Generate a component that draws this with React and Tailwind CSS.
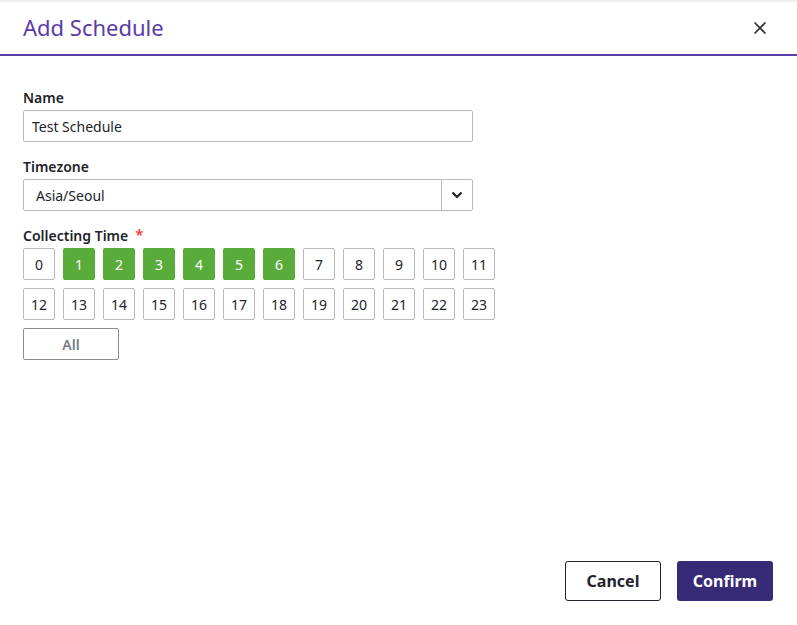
import React, { useState } from 'react';

const HOURS = Array.from({ length: 24 }, (_, i) => i);

const App = () => {
  const [name, setName] = useState('Test Schedule');
  const [selected, setSelected] = useState([1, 2, 3, 4, 5, 6]);

  const toggleHour = (h) => {
    setSelected((prev) => (prev.includes(h) ? prev.filter((x) => x !== h) : [...prev, h]));
  };

  return (
    <div
      className="h-[625px] w-[797px] flex flex-col bg-white border-t-2 border-[#efeff1] text-[#22232b]"
      style={{ fontFamily: '"Noto Sans", "Open Sans", sans-serif' }}
    >
      {/* Header */}
      <div className="h-[54px] flex items-center justify-between pl-[23px] pr-[31px] border-b-2 border-[#5d3ba9]">
        <h2 className="text-[22px] leading-none text-[#5b3aa8] pb-[2px]">Add Schedule</h2>
        <button className="w-[12px] h-[12px] flex items-center justify-center">
          <svg width="12" height="12" viewBox="0 0 12 12">
            <path d="M1 1L11 11M11 1L1 11" stroke="#2b2c33" strokeWidth="1.7" strokeLinecap="round" />
          </svg>
        </button>
      </div>

      {/* Body */}
      <div className="pl-[23px] pt-[32px] flex flex-col">
        <label className="text-[14px] leading-5 font-semibold mb-[2px]">Name</label>
        <input
          value={name}
          onChange={(e) => setName(e.target.value)}
          className="w-[450px] h-[32px] border border-[#b9b9c0] rounded-[2px] px-[8px] text-[14px] text-[#22232b] outline-none"
        />

        <label className="text-[14px] leading-5 font-semibold mt-[15px] mb-[2px]">Timezone</label>
        <div className="w-[450px] h-[32px] border border-[#b9b9c0] rounded-[2px] flex text-[14px]">
          <div className="flex-1 flex items-center pl-[12px]">Asia/Seoul</div>
          <div className="w-[31px] border-l border-[#b9b9c0] flex items-center justify-center">
            <svg width="12" height="8" viewBox="0 0 12 8">
              <path d="M1.5 1.5L6 6L10.5 1.5" fill="none" stroke="#22232b" strokeWidth="2.2" />
            </svg>
          </div>
        </div>

        <label className="text-[14px] leading-5 font-semibold mt-[15px] mb-[2px] flex items-start">
          Collecting Time
          <span className="text-[#ee3b2e] ml-[7px] text-[15px] leading-4">*</span>
        </label>
        <div className="grid grid-cols-[repeat(12,32px)] gap-[8px]">
          {HOURS.map((h) => {
            const on = selected.includes(h);
            return (
              <button
                key={h}
                onClick={() => toggleHour(h)}
                className={
                  on
                    ? 'h-[32px] w-[32px] rounded-[2px] bg-[#5aac3a] border border-[#5aac3a] text-white text-[14px] flex items-center justify-center'
                    : 'h-[32px] w-[32px] rounded-[2px] bg-white border border-[#b9b9c0] text-[#22232b] text-[14px] flex items-center justify-center'
                }
              >
                {h}
              </button>
            );
          })}
        </div>
        <button
          onClick={() => setSelected(selected.length === 24 ? [] : HOURS)}
          className="mt-[8px] w-[96px] h-[32px] border border-[#8a8a93] rounded-[2px] text-[14px] font-semibold text-[#7a7b86]"
        >
          All
        </button>
      </div>

      {/* Footer */}
      <div className="mt-auto flex justify-end gap-[16px] pr-[24px] pb-[24px]">
        <button className="w-[96px] h-[40px] border border-[#22232b] rounded-[3px] text-[16px] font-bold text-[#22232b]">
          Cancel
        </button>
        <button className="w-[96px] h-[40px] bg-[#372a76] rounded-[3px] text-[16px] font-bold text-white">
          Confirm
        </button>
      </div>
    </div>
  );
};

export default App;
